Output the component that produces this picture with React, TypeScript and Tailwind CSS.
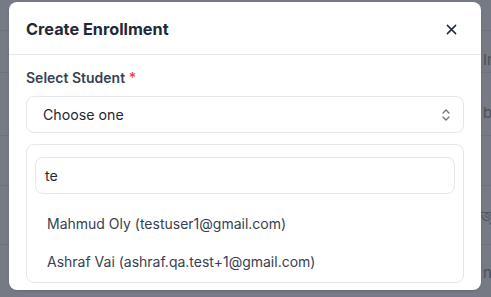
import React from "react";

export default function App() {
  return (
    <div
      className="relative w-[491px] h-[297px] overflow-hidden bg-[#757a85]"
      style={{ fontFamily: "Inter, 'Noto Sans', sans-serif" }}
    >
      {/* faint background page */}
      <div className="absolute inset-0 text-[#4b4f58] text-[15px]">
        <div className="absolute left-0 right-0 top-[30px] h-px bg-[#6e727c]" />
        <div className="absolute left-0 right-0 top-[72px] h-px bg-[#6e727c]" />
        <div className="absolute left-0 right-0 top-[135px] h-px bg-[#6e727c]" />
        <div className="absolute left-0 right-0 top-[185px] h-px bg-[#6e727c]" />
        <div className="absolute left-0 right-0 top-[244px] h-px bg-[#6e727c]" />
        <div className="absolute left-[483px] top-[49px] w-[8px] overflow-hidden whitespace-nowrap">In</div>
        <div className="absolute left-[483px] top-[102px] w-[8px] overflow-hidden">b</div>
        <div className="absolute left-[481px] top-[205px] w-[10px] overflow-hidden whitespace-nowrap" style={{ fontFamily: "'Noto Sans', sans-serif" }}>জু</div>
        <div className="absolute left-[483px] top-[262px] w-[8px] overflow-hidden">n</div>
      </div>

      <div className="absolute left-[9px] top-[2px] w-[472px] h-[288px] bg-white rounded-lg flex flex-col shadow">
        <div className="h-[53px] flex items-center justify-between pt-[2px] pl-[17px] pr-[24px] border-b border-[#e5e7eb]">
          <h2 className="text-[16.3px] font-bold text-[#1f2937]">Create Enrollment</h2>
          <svg width="11" height="11" viewBox="0 0 12 12" className="text-[#1f2937]">
            <path d="M1.5 1.5l9 9M10.5 1.5l-9 9" stroke="currentColor" strokeWidth="1.6" strokeLinecap="round" />
          </svg>
        </div>
        <div className="px-[17px] pt-[13px] flex flex-col">
          <label className="text-[14px] font-semibold text-[#374151] leading-[20px]">
            Select Student <span className="text-[#ef4444]">*</span>
          </label>
          <div className="mt-[8px] h-[37px] rounded-lg border border-[#e5e7eb] flex items-center justify-between pl-[16px] pr-[12px]">
            <span className="text-[14.2px] text-[#1f2937]">Choose one</span>
            <svg width="10" height="14" viewBox="0 0 10 14" className="text-[#6b7280]">
              <path d="M2 5l3-3 3 3M2 9l3 3 3-3" fill="none" stroke="currentColor" strokeWidth="1.3" strokeLinecap="round" strokeLinejoin="round" />
            </svg>
          </div>
          <div className="mt-[11px] h-[139px] rounded-lg border border-[#e5e7eb] px-[8px] pt-[12px] flex flex-col">
            <div className="h-[37px] rounded-lg border border-[#e5e7eb] flex items-center pl-[9px] pt-[1px]">
              <span className="text-[14.2px] text-[#1f2937]">te</span>
            </div>
            <div className="mt-[10px] h-[38px] flex items-center pl-[12px] text-[14px] text-[#374151]">
              Mahmud Oly (testuser1@gmail.com)
            </div>
            <div className="h-[38px] flex items-center pl-[12px] text-[14px] text-[#374151]">
              Ashraf Vai (ashraf.qa.test+1@gmail.com)
            </div>
          </div>
        </div>
      </div>
    </div>
  );
}
